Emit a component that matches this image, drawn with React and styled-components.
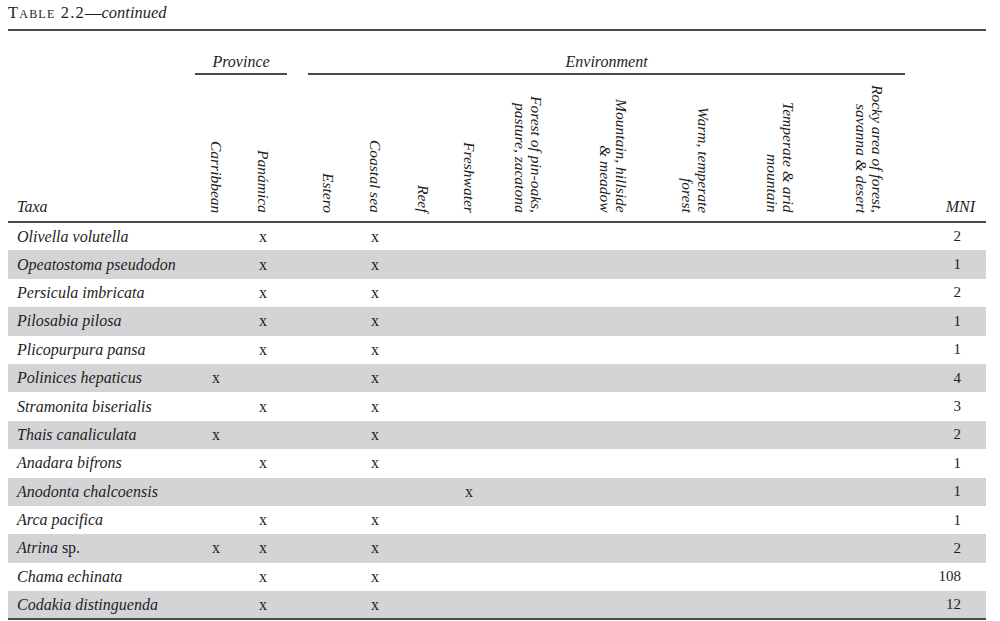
import React from "react";
import styled, { createGlobalStyle } from "styled-components";

const GlobalStyle = createGlobalStyle`
  html, body { margin: 0; padding: 0; background: #ffffff; }
  body { font-family: "Liberation Serif", "DejaVu Serif", serif; color: #1e1e1e; }
`;

const Page = styled.div`
  padding: 0 14px 0 8px;
  width: 978px;
`;

const Caption = styled.div`
  box-sizing: border-box;
  height: 31px;
  padding-top: 3px;
  font-size: 16.5px;
  line-height: 20px;
  border-bottom: 2px solid #4a4a4a;
`;

const SmallCaps = styled.span`
  font-variant: small-caps;
  letter-spacing: 1.2px;
  font-variant-numeric: oldstyle-nums;
`;

const Continued = styled.span`
  font-style: italic;
`;

const Table = styled.table`
  width: 978px;
  table-layout: fixed;
  border-collapse: collapse;
  font-size: 16px;
  border-bottom: 2px solid #4a4a4a;
`;

const HeadRow = styled.tr`
  height: ${(p) => p.$h}px;
`;

const GroupCell = styled.th`
  padding: 0;
  vertical-align: bottom;
  font-weight: normal;
`;

const GroupLabel = styled.div`
  margin-left: 2px;
  padding-bottom: 2px;
  font-style: italic;
  line-height: 18px;
  text-align: center;
  border-bottom: 2px solid #4a4a4a;
`;

const ColumnHead = styled.th`
  padding: 0 ${(p) => p.$pr ?? 0}px ${(p) => p.$pb ?? 4}px ${(p) => p.$pl ?? 0}px;
  vertical-align: bottom;
  font-weight: normal;
  font-style: italic;
  text-align: ${(p) => p.$align || "center"};
  line-height: 18px;
  border-bottom: 2px solid #4a4a4a;
`;

const Vertical = styled.div`
  display: inline-block;
  writing-mode: vertical-rl;
  text-align: end;
  font-size: 15.5px;
  line-height: 16px;
  white-space: nowrap;
  height: 128px;
`;

const Row = styled.tr`
  height: 28.4px;
  background: ${(p) => (p.$shaded ? "#d4d4d6" : "transparent")};
`;

const NameCell = styled.td`
  padding: 0 0 0 9px;
  font-style: italic;
  white-space: nowrap;
  vertical-align: middle;
`;

const Upright = styled.span`
  font-style: normal;
`;

const MarkCell = styled.td`
  padding: 0;
  text-align: center;
  vertical-align: middle;
`;

const CountCell = styled.td`
  padding: 0 25px 0 0;
  text-align: right;
  vertical-align: middle;
  font-size: 15px;
  font-variant-numeric: oldstyle-nums;
`;

const widths = [185, 46, 48, 19, 44, 50, 46, 46, 72, 98, 66, 104, 73, 25, 56];

const envCols = [
  ["Estero"],
  ["Coastal sea"],
  ["Reef"],
  ["Freshwater"],
  ["Forest of pin-oaks,", "pasture, zacatona"],
  ["Mountain, hillside", "& meadow"],
  ["Warm, temperate", "forest"],
  ["Temperate & arid", "mountain"],
  ["Rocky area of forest,", "savanna & desert"],
];

// mark indices: 0 carib, 1 pan, 2 estero, 3 coastal, 4 reef, 5 fresh, 6 forest, 7 mountain, 8 warm, 9 temperate, 10 rocky
const rows = [
  { name: "Olivella volutella", marks: [1, 3], mni: "2" },
  { name: "Opeatostoma pseudodon", marks: [1, 3], mni: "1" },
  { name: "Persicula imbricata", marks: [1, 3], mni: "2" },
  { name: "Pilosabia pilosa", marks: [1, 3], mni: "1" },
  { name: "Plicopurpura pansa", marks: [1, 3], mni: "1" },
  { name: "Polinices hepaticus", marks: [0, 3], mni: "4" },
  { name: "Stramonita biserialis", marks: [1, 3], mni: "3" },
  { name: "Thais canaliculata", marks: [0, 3], mni: "2" },
  { name: "Anadara bifrons", marks: [1, 3], mni: "1" },
  { name: "Anodonta chalcoensis", marks: [5], mni: "1" },
  { name: "Arca pacifica", marks: [1, 3], mni: "1" },
  { name: "Atrina", suffix: "sp.", marks: [0, 1, 3], mni: "2" },
  { name: "Chama echinata", marks: [1, 3], mni: "108" },
  { name: "Codakia distinguenda", marks: [1, 3], mni: "12" },
];

function VerticalText({ lines }) {
  return (
    <Vertical>
      {lines.map((l, i) => (
        <React.Fragment key={i}>
          {i > 0 && <br />}
          {l}
        </React.Fragment>
      ))}
    </Vertical>
  );
}

export default function App() {
  return (
    <Page>
      <GlobalStyle />
      <Caption>
        <SmallCaps>Table 2.2</SmallCaps>—<Continued>continued</Continued>
      </Caption>
      <Table>
        <colgroup>
          {widths.map((w, i) => (
            <col key={i} style={{ width: w }} />
          ))}
        </colgroup>
        <thead>
          <HeadRow $h={44}>
            <GroupCell />
            <GroupCell colSpan={2}>
              <GroupLabel>Province</GroupLabel>
            </GroupCell>
            <GroupCell />
            <GroupCell colSpan={9}>
              <GroupLabel>Environment</GroupLabel>
            </GroupCell>
            <GroupCell />
            <GroupCell />
          </HeadRow>
          <HeadRow $h={147}>
            <ColumnHead $align="left" $pl={9} $pb={5}>
              Taxa
            </ColumnHead>
            <ColumnHead>
              <VerticalText lines={["Carribbean"]} />
            </ColumnHead>
            <ColumnHead>
              <VerticalText lines={["Panámica"]} />
            </ColumnHead>
            <ColumnHead />
            {envCols.map((lines, i) => (
              <ColumnHead key={i}>
                <VerticalText lines={lines} />
              </ColumnHead>
            ))}
            <ColumnHead />
            <ColumnHead $align="right" $pr={11} $pb={5}>
              MNI
            </ColumnHead>
          </HeadRow>
        </thead>
        <tbody>
          {rows.map((r, ri) => {
            const flags = Array.from({ length: 11 }, (_, k) => r.marks.includes(k));
            return (
              <Row key={r.name} $shaded={ri % 2 === 1}>
                <NameCell>
                  {r.name}
                  {r.suffix && <Upright> {r.suffix}</Upright>}
                </NameCell>
                <MarkCell>{flags[0] ? "x" : ""}</MarkCell>
                <MarkCell>{flags[1] ? "x" : ""}</MarkCell>
                <MarkCell />
                {flags.slice(2).map((f, k) => (
                  <MarkCell key={k}>{f ? "x" : ""}</MarkCell>
                ))}
                <MarkCell />
                <CountCell>{r.mni}</CountCell>
              </Row>
            );
          })}
        </tbody>
      </Table>
    </Page>
  );
}
